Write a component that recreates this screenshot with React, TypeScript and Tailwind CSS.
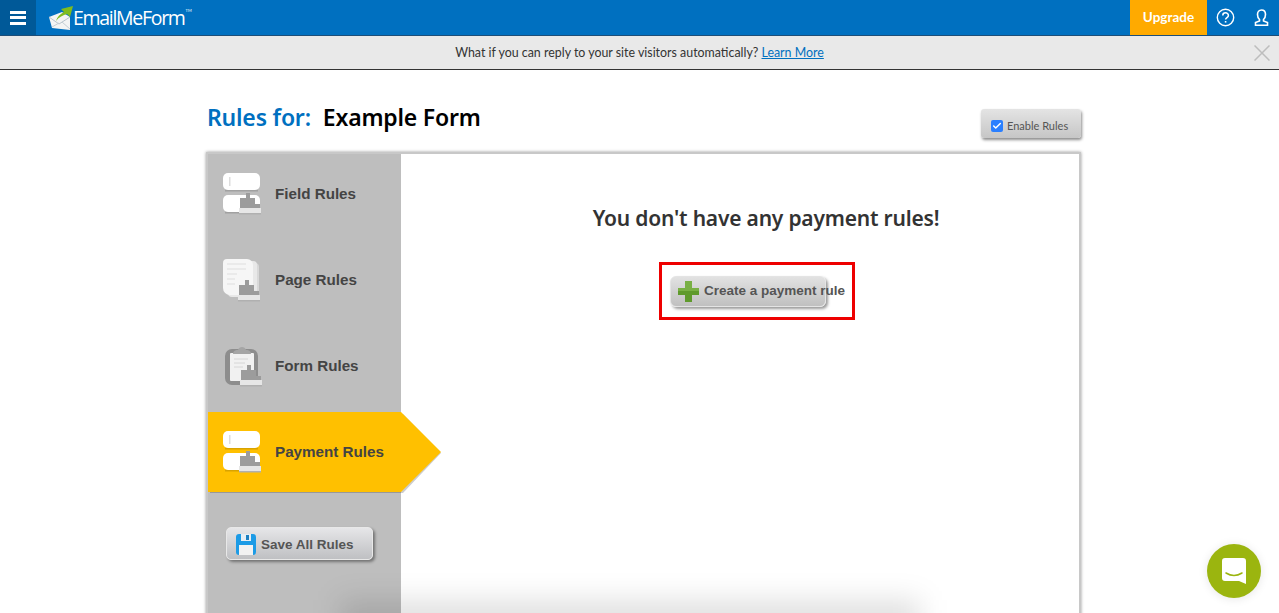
import { Check } from 'lucide-react'

function Stairs({ x, y }: { x: number; y: number }) {
  return (
    <g transform={`translate(${x} ${y})`}>
      <path d="M7 0h4v5h5v6h5v5H1V5h6z" fill="#9c9c9c" />
      <rect x="0" y="15" width="22" height="5" fill="#e6e6e6" />
      <rect x="0" y="20" width="22" height="1.500" fill="#b0b0b0" />
    </g>
  )
}

function FieldIcon() {
  return (
    <svg width="42" height="44" viewBox="0 0 42 44" className="shrink-0">
      <rect x="0" y="0" width="37" height="17" rx="5" fill="#fff" />
      <rect x="2" y="17" width="33" height="1.500" fill="#000" opacity="0.15" />
      <rect x="6" y="4" width="1.500" height="9" fill="#ddd" />
      <rect x="0" y="22" width="37" height="17" rx="5" fill="#fff" />
      <rect x="2" y="39" width="30" height="1.500" fill="#000" opacity="0.15" />
      <Stairs x={16} y={20} />
    </svg>
  )
}

function PageIcon() {
  return (
    <svg width="42" height="44" viewBox="0 0 42 44" className="shrink-0">
      <rect x="8" y="4" width="28" height="34" rx="4" fill="#d8d8d8" />
      <rect x="5" y="2" width="29" height="36" rx="4" fill="#e8e8e8" />
      <path d="M0 4a4 4 0 0 1 4-4h20a6 6 0 0 1 6 6v26a4 4 0 0 1-4 4H7a7 7 0 0 1-7-7z" fill="#f6f6f6" />
      <path d="M4 5h19M4 10h19M4 15h10M4 20h8M4 25h8" stroke="#dedede" strokeWidth="1" />
      <Stairs x={15} y={21} />
    </svg>
  )
}

function FormIcon() {
  return (
    <svg width="42" height="46" viewBox="0 0 42 46" className="shrink-0">
      <rect x="2" y="5" width="33" height="36" rx="7" fill="#8d8d8d" />
      <rect x="7" y="9" width="24" height="28" rx="1" fill="#f1f1f1" />
      <path d="M11 15h14M11 19h11M11 23h9" stroke="#d6d6d6" strokeWidth="1" />
      <path d="M10 10c0-4 4-4 5-4 1-4 7-4 8 0 1 0 5 0 5 4z" fill="#a5a5a5" />
      <Stairs x={17} y={21} />
    </svg>
  )
}

function RuleRow({ label, icon }: { label: string; icon: React.ReactNode }) {
  return (
    <div className="flex h-[86px] items-center pl-[15px]">
      <div className="flex w-[52px] shrink-0 pt-[2px]">{icon}</div>
      <span className="text-[15.200px] font-bold text-[#444] [font-family:'Liberation_Sans',sans-serif]">{label}</span>
    </div>
  )
}

export default function App() {
  return (
    <div className="relative h-[613px] w-[1279px] overflow-hidden bg-white [font-family:Lato,sans-serif]">
      <header className="flex h-[36px] items-stretch border-b border-[#1d4e78] bg-[#0070c0]">
        <div className="flex w-[36px] flex-col items-center justify-center gap-[2.500px] bg-[#005998]">
          <span className="h-[3px] w-[16px] bg-white" />
          <span className="h-[3px] w-[16px] bg-white" />
          <span className="h-[3px] w-[16px] bg-white" />
        </div>
        <div className="ml-[13px] flex items-center">
          <svg width="24" height="28" viewBox="0 0 24 28" className="shrink-0">
            <path d="M0 13 13 8l8 5v13L3 24z" fill="#f4f4f4" />
            <path d="m0 13 10 7 11-7" fill="none" stroke="#b9c4cc" strokeWidth="1" />
            <path d="M3 23l7-4M21 25l-8-7" stroke="#c5ced4" strokeWidth="1" />
            <path d="M7 17c1-4 4-7 8-9l-3-3 12-3-3 11-3-3c-4 1-8 3-11 7z" fill="#7fbc1e" />
          </svg>
          <span className="text-[19.500px] font-medium leading-none tracking-[-1.300px] text-white [font-family:'Open_Sans',sans-serif]">EmailMeForm</span>
          <span className="mb-[14px] ml-[1px] text-[4px] text-white">TM</span>
        </div>
        <div className="ml-auto flex h-[35px] w-[77px] items-center justify-center bg-[#ffaa00] pb-[1px] text-[13.500px] font-bold text-white">Upgrade</div>
        <div className="flex w-[36px] items-center justify-center">
          <svg width="19" height="19" viewBox="0 0 19 19" fill="none" stroke="#fff">
            <circle cx="9.500" cy="9.500" r="8.200" strokeWidth="1.400" />
            <path d="M6.800 7.400c0-3.400 5.600-3.400 5.600 0 0 2.100-2.800 2.200-2.800 4.200" strokeWidth="1.500" />
            <path d="M9.600 13v1.600" strokeWidth="1.600" />
          </svg>
        </div>
        <div className="flex w-[36px] items-center justify-center">
          <svg width="15" height="17" viewBox="0 0 15 17" fill="none" stroke="#fff" strokeWidth="1.600">
            <path d="M5.500 10.500C3.800 9 3.500 7.600 3.500 5.500c0-2.600 1.600-4.500 4-4.500s4 1.900 4 4.500c0 2.100-.3 3.500-2 5v1.500l4 1.500v2.800H1.500v-2.800l4-1.500z" />
          </svg>
        </div>
      </header>

      <div className="relative flex h-[34px] items-center justify-center border-b border-[#333] bg-[#e9e9e9] pt-[1px] text-[12.400px] text-[#333]">
        <p>
          What if you can reply to your site visitors automatically? <a className="text-[#0070c0] underline">Learn More</a>
        </p>
        <svg className="absolute right-[9px] top-[9px]" width="16" height="16" viewBox="0 0 16 16" stroke="#bdbdbd" strokeWidth="1.500">
          <path d="m0.500 0.500 15 15M15.500 0.500l-15 15" />
        </svg>
      </div>

      <main className="ml-[206px] w-[875px]">
        <div className="flex h-[82px] items-start justify-between">
          <h1 className="mt-[30px] pl-[1px] text-[23px] font-semibold leading-[34px] tracking-[-0.200px] [font-family:'Noto_Sans',sans-serif]">
            <span className="text-[#0070c0]">Rules for:</span>
            <span className="ml-[12px] text-black">Example Form</span>
          </h1>
          <label className="mt-[39px] flex h-[29px] w-[100px] items-center gap-[4px] rounded-[3px] bg-gradient-to-b from-[#e4e4e4] to-[#c6c6c6] pl-[10px] pt-[5px] text-[11px] text-[#555] shadow-[1px_2px_3px_rgba(0,0,0,0.45)]">
            <span className="flex h-[12px] w-[12px] items-center justify-center rounded-[2px] bg-[#2a7fff]">
              <Check size={10} strokeWidth={3.500} color="#fff" />
            </span>
            Enable Rules
          </label>
        </div>

        <section className="relative flex h-[470px] border-2 border-[#c8c8c8] bg-white shadow-[0_0_3px_rgba(0,0,0,0.4)]">
          <aside className="w-[193px] shrink-0 bg-[#bebebe]">
            <div className="-mt-[3px]">
              <RuleRow label="Field Rules" icon={<FieldIcon />} />
              <RuleRow label="Page Rules" icon={<PageIcon />} />
              <RuleRow label="Form Rules" icon={<FormIcon />} />
            </div>
            <div className="relative mt-[3px] h-[80px] w-[233px]">
              <svg className="absolute inset-0 overflow-visible" width="233" height="80" viewBox="0 0 233 80">
                <path d="M2 2h193l38 39-38 40H2z" fill="#000" opacity="0.2" />
                <path d="M0 0h193l40 40-40 40H0z" fill="#ffc000" />
              </svg>
              <div className="relative flex h-full items-center pl-[15px]">
                <div className="flex w-[52px] shrink-0 pt-[2px]"><FieldIcon /></div>
                <span className="text-[15.200px] font-bold text-[#444] [font-family:'Liberation_Sans',sans-serif]">Payment Rules</span>
              </div>
            </div>
            <button className="ml-[18px] mt-[35px] flex h-[33px] w-[147px] items-center rounded-[5px] border border-[#e8e8e8] bg-gradient-to-b from-[#e6e6e8] to-[#bfc0c3] pl-[9px] pt-[1px] text-[13.500px] font-bold text-[#555] shadow-[2px_2px_3px_rgba(0,0,0,0.4)] [font-family:'Liberation_Sans',sans-serif]">
              <svg width="20" height="21" viewBox="0 0 20 21" className="shrink-0">
                <rect width="20" height="21" rx="3" fill="#1c9be6" />
                <rect x="5" y="0" width="10" height="7" fill="#e6eef4" />
                <rect x="10" y="1" width="3" height="5" fill="#1c7fc0" />
                <rect x="3" y="11" width="14" height="10" fill="#f2f2f2" />
              </svg>
              <span className="ml-[5px] mt-[2px]">Save All Rules</span>
            </button>
          </aside>

          <div className="flex flex-1 flex-col items-center">
            <h2 className="ml-[52px] mt-[49px] text-[21px] font-semibold leading-[30px] tracking-[-0.200px] text-[#333] [font-family:'Noto_Sans',sans-serif]">You don't have any payment rules!</h2>
            <div className="ml-[34px] mt-[29px] flex h-[58px] w-[196px] items-center border-[3px] border-[#ee0000] pl-[8px]">
              <button className="flex h-[31px] w-[156px] items-center whitespace-nowrap rounded-[6px] border border-[#e4e4e4] bg-gradient-to-b from-[#e2e2e2] to-[#c0c0c0] pl-[7px] text-[13.500px] font-bold text-[#555] shadow-[2px_2px_3px_rgba(0,0,0,0.4)] [font-family:'Liberation_Sans',sans-serif]">
                <svg width="21" height="21" viewBox="0 0 21 21" className="shrink-0">
                  <path d="M7 0h7v7h7v7h-7v7H7v-7H0V7h7z" fill="#5f9a2c" />
                  <path d="M7 0h7v7h7v3H0V7h7z" fill="#79b044" />
                </svg>
                <span className="ml-[5px]">Create a payment rule</span>
              </button>
            </div>
          </div>
          <div className="pointer-events-none absolute bottom-[-18px] left-[132px] right-[159px] h-[38px] bg-black/[0.12] blur-[14px]" />
        </section>
      </main>

      <div className="absolute left-[1207px] top-[544px] flex h-[54px] w-[54px] items-center justify-center rounded-full bg-[#9bb50f] shadow-[0_1px_10px_rgba(0,0,0,0.1)]">
        <svg width="26" height="28" viewBox="0 0 26 28">
          <path d="M4 1h18a3 3 0 0 1 3 3v23l-7-3H4a3 3 0 0 1-3-3V4a3 3 0 0 1 3-3z" fill="#fff" />
          <path d="M5 16c5 3 11 3 16 0" fill="none" stroke="#9bb50f" strokeWidth="1.500" strokeLinecap="round" />
        </svg>
      </div>
    </div>
  )
}
